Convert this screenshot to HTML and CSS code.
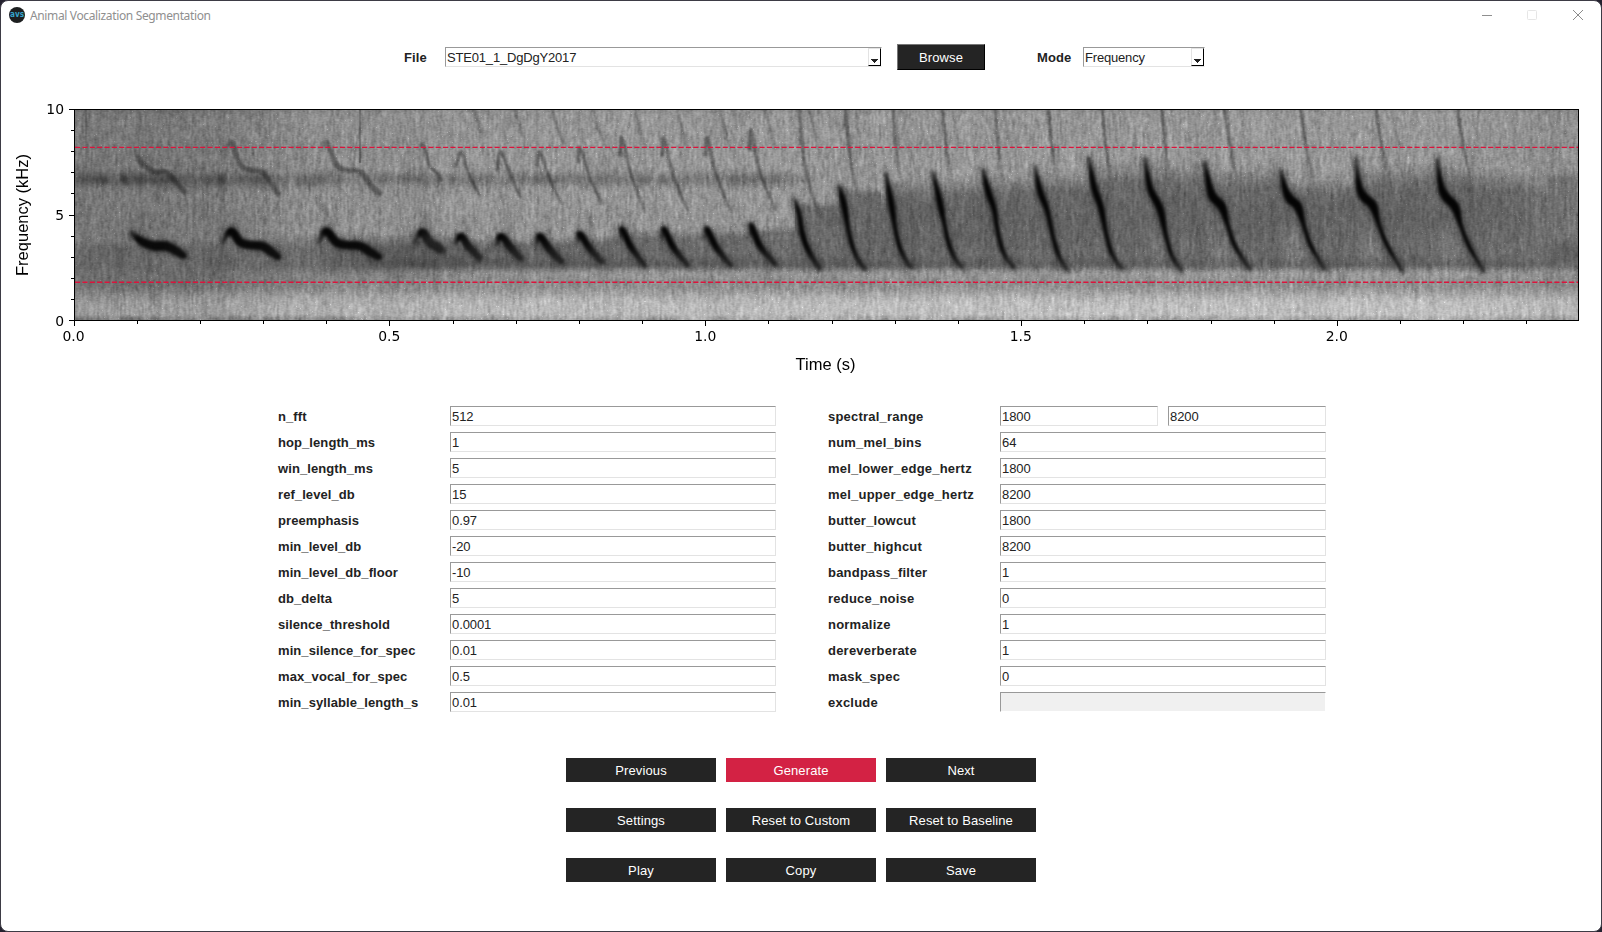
FILE: index.html
```html
<!DOCTYPE html>
<html lang="en">
<head>
<meta charset="utf-8">
<title>Animal Vocalization Segmentation</title>
<link rel="stylesheet" href="styles.css">
</head>
<body>
<div class="window">
  <header class="titlebar">
    <svg class="logo" width="16" height="16" viewBox="0 0 16 16"><circle cx="8" cy="8" r="8" fill="#1d1f20"/><text x="8" y="10.200" text-anchor="middle" textLength="14" lengthAdjust="spacingAndGlyphs" class="logo-text">avs</text></svg>
    <span class="title">Animal Vocalization Segmentation</span>
    <svg class="controls" width="110" height="16" viewBox="0 0 110 16" fill="none">
      <path d="M4 8.500h10" stroke="#8f8f8f"/>
      <rect x="49.500" y="3.500" width="9" height="9" rx="1" stroke="#e6e6e6"/>
      <path d="M95 3l10 10M105 3L95 13" stroke="#8b8b8b"/>
    </svg>
  </header>

  <section class="toolbar">
    <label class="label file-label">File</label>
    <div class="combo combo-file"><span>STE01_1_DgDgY2017</span><i class="arrow"><svg width="7" height="4" viewBox="0 0 7 4"><path d="M0 0h7v1H6v1H5v1H4v1H3V3H2V2H1V1H0z" fill="#222"/></svg></i></div>
    <button class="browse">Browse</button>
    <label class="label mode-label">Mode</label>
    <div class="combo combo-mode"><span>Frequency</span><i class="arrow"><svg width="7" height="4" viewBox="0 0 7 4"><path d="M0 0h7v1H6v1H5v1H4v1H3V3H2V2H1V1H0z" fill="#222"/></svg></i></div>
  </section>

  <section class="plot">
    <canvas id="spectrogram" class="spectrogram" width="1504" height="211"></canvas>
    <svg id="axes" class="axes" width="1600" height="300" viewBox="1 90 1600 300">
      <g stroke="#dc143c" stroke-width="1.4" stroke-dasharray="5.140 2.220">
        <path d="M75 147.400H1578M75 282.300H1578"/>
      </g>
      <rect x="74.500" y="109.500" width="1504" height="211" fill="none" stroke="#000"/>
      <g id="ticks" stroke="#000"></g>
      <g class="tick-text" text-anchor="end">
        <text x="64" y="114">10</text><text x="64" y="220">5</text><text x="64" y="326">0</text>
      </g>
      <g class="tick-text" text-anchor="middle">
        <text x="73.500" y="341">0.0</text><text x="389.300" y="341">0.5</text><text x="705.300" y="341">1.0</text><text x="1020.700" y="341">1.5</text><text x="1336.700" y="341">2.0</text>
      </g>
      <text class="axis-text" x="825.500" y="370" text-anchor="middle">Time (s)</text>
      <text class="axis-text" transform="translate(28 215) rotate(-90)" text-anchor="middle">Frequency (kHz)</text>
    </svg>
  </section>

  <section class="params">
    <div class="column">
      <div class="row"><label class="label">n_fft</label><div class="field">512</div></div>
      <div class="row"><label class="label">hop_length_ms</label><div class="field">1</div></div>
      <div class="row"><label class="label">win_length_ms</label><div class="field">5</div></div>
      <div class="row"><label class="label">ref_level_db</label><div class="field">15</div></div>
      <div class="row"><label class="label">preemphasis</label><div class="field">0.97</div></div>
      <div class="row"><label class="label">min_level_db</label><div class="field">-20</div></div>
      <div class="row"><label class="label">min_level_db_floor</label><div class="field">-10</div></div>
      <div class="row"><label class="label">db_delta</label><div class="field">5</div></div>
      <div class="row"><label class="label">silence_threshold</label><div class="field">0.0001</div></div>
      <div class="row"><label class="label">min_silence_for_spec</label><div class="field">0.01</div></div>
      <div class="row"><label class="label">max_vocal_for_spec</label><div class="field">0.5</div></div>
      <div class="row"><label class="label">min_syllable_length_s</label><div class="field">0.01</div></div>
    </div>
    <div class="column wide-labels">
      <div class="row"><label class="label">spectral_range</label><div class="field">1800</div><div class="field second">8200</div></div>
      <div class="row"><label class="label">num_mel_bins</label><div class="field">64</div></div>
      <div class="row"><label class="label">mel_lower_edge_hertz</label><div class="field">1800</div></div>
      <div class="row"><label class="label">mel_upper_edge_hertz</label><div class="field">8200</div></div>
      <div class="row"><label class="label">butter_lowcut</label><div class="field">1800</div></div>
      <div class="row"><label class="label">butter_highcut</label><div class="field">8200</div></div>
      <div class="row"><label class="label">bandpass_filter</label><div class="field">1</div></div>
      <div class="row"><label class="label">reduce_noise</label><div class="field">0</div></div>
      <div class="row"><label class="label">normalize</label><div class="field">1</div></div>
      <div class="row"><label class="label">dereverberate</label><div class="field">1</div></div>
      <div class="row"><label class="label">mask_spec</label><div class="field">0</div></div>
      <div class="row"><label class="label">exclude</label><div class="field disabled"></div></div>
    </div>
  </section>

  <section class="actions">
    <button>Previous</button><button class="primary">Generate</button><button>Next</button>
    <button>Settings</button><button>Reset to Custom</button><button>Reset to Baseline</button>
    <button>Play</button><button>Copy</button><button>Save</button>
  </section>
</div>
<script src="spectrogram.js"></script>
</body>
</html>
```
FILE: styles.css
```css
* { box-sizing: border-box; }
body {
  margin: 0;
  background: #24222f;
  font-family: "Liberation Sans", Arial, sans-serif;
  font-size: 13px;
  color: #222;
}
.window {
  width: 1602px;
  height: 932px;
  border: 1px solid #3d3b45;
  border-radius: 8px;
  background: #fff;
  overflow: hidden;
}
.titlebar {
  display: flex;
  align-items: center;
  height: 28px;
  padding: 0 13px 0 8px;
}
.logo { flex: none; }
.logo-text { font: bold 8px "DejaVu Sans", sans-serif; fill: #35a5cd; }
.title {
  margin-left: 5px;
  padding-top: 1px;
  font: 12px "Noto Sans", sans-serif;
  letter-spacing: -0.36px;
  color: #8f8f8f;
}
.controls { margin-left: auto; }

.toolbar {
  display: flex;
  align-items: center;
  height: 56px;
  padding-left: 403px;
}
.label {
  font-weight: bold;
  letter-spacing: 0.08px;
  line-height: 22px;
}
.wide-labels .label { letter-spacing: 0.22px; }
.file-label { width: 41px; padding-top: 2px; }
.combo {
  display: flex;
  justify-content: space-between;
  height: 20px;
  border: 1px solid;
  border-color: #999 #fff #e3e3e3 #999;
  padding-left: 1px;
  line-height: 20px;
  letter-spacing: -0.18px;
}
.combo-file { width: 437px; }
.combo-mode { width: 122px; }
.arrow {
  display: flex;
  justify-content: center;
  align-items: flex-end;
  width: 13px;
  height: 18px;
  padding-bottom: 2px;
  border: 1px solid;
  border-color: #e3e3e3 #000 #000 #e3e3e3;
}
button {
  border: 0;
  border-radius: 0;
  padding: 0;
  background: #242424;
  color: #fff;
  font: 13px "Liberation Sans", Arial, sans-serif;
  letter-spacing: 0.12px;
}
.browse {
  width: 88px;
  height: 26px;
  margin-left: 15px;
  border: 1px solid;
  border-color: #777 #000 #000 #777;
}
.mode-label { width: 46px; margin-left: 52px; padding-top: 2px; }

.plot { position: relative; height: 300px; margin-top: 5px; }
.spectrogram {
  display: block;
  position: absolute;
  left: 73px;
  top: 19px;
}
.axes { display: block; position: relative; }
.tick-text { font: 13.900px "DejaVu Sans", sans-serif; fill: #000; }
.axis-text { font: 16.500px "Liberation Sans", Arial, sans-serif; fill: #000; }

.params {
  display: flex;
  gap: 52px;
  padding: 16px 0 0 277px;
}
.column { display: grid; grid-auto-rows: 20px; row-gap: 6px; width: 498px; }
.row { display: flex; height: 20px; }
.row .label { width: 172px; flex: none; }
.field {
  flex: 1;
  height: 20px;
  border: 1px solid;
  border-color: #999 #e3e3e3 #e3e3e3 #999;
  padding-left: 1px;
  line-height: 20px;
  letter-spacing: -0.1px;
}
.second { margin-left: 10px; }
.disabled { background: #f0f0f0; border-right-color: #fff; border-bottom-color: #fff; }

.actions {
  display: grid;
  grid-template-columns: repeat(3, 150px);
  grid-auto-rows: 24px;
  gap: 26px 10px;
  padding: 46px 0 0 565px;
}
.primary { background: #d32244; }
```
FILE: spectrogram.js
```js
const X0 = 74, Y0 = 109, W = 1504, H = 211;
const canvas = document.getElementById('spectrogram');
const ctx = canvas.getContext('2d');

let seed = 20171;
function rnd() {
  seed = (seed * 1664525 + 1013904223) >>> 0;
  return seed / 4294967296;
}
const gauss = () => rnd() + rnd() + rnd() + rnd() - 2;

// Calls as [x, y, stroke width] ridge points.
const calls = [
  [[132,233,4],[137,238,6],[145,243,8],[155,246,9],[166,246,9],[176,251,8],[184,256,6]],
  [[223,242,3],[231,231,7],[240,242,8],[250,245,8],[262,246,8],[270,251,8],[278,257,6]],
  [[319,242,3],[326,231,7],[336,242,8],[346,245,8],[360,246,8],[370,252,8],[379,257,6]],
  [[415,243,3],[422,232,7],[430,243,8],[436,246,8],[441,250,7]],
  [[456,243,3],[461,236,6],[469,247,7],[480,258,6]],
  [[497,245,3],[501,236,6],[511,248,7],[521,259,5]],
  [[537,243,3],[540,236,6],[550,250,7],[562,262,5]],
  [[578,241,3],[580,234,6],[590,249,6],[602,262,5]],
  [[620,238,2],[622,229,5],[631,247,6],[645,266,4]],
  [[662,238,2],[664,229,5],[673,247,6],[688,266,4]],
  [[705,238,2],[707,229,5],[716,247,6],[731,266,4]],
  [[750,235,2],[751,225,5],[760,246,6],[776,265,4]],
  [[795,200,3],[799,214,4],[802,232,5],[806,245,5],[812,257,5],[820,269,4]],
  [[839,186,3],[844,205,6],[848,228,4],[852,245,4],[858,260,4],[865,269,4]],
  [[886,174,3],[891,202,6],[895,227,4],[899,245,4],[905,259,4],[912,268,3]],
  [[933,173,3],[940,203,6],[944,222,4],[948,241,4],[954,257,4],[962,268,3]],
  [[983,170,3],[988,191,6],[994,209,5],[998,233,4],[1004,254,4],[1014,268,3]],
  [[1035,166,2],[1040,191,6],[1047,210,5],[1053,237,4],[1059,256,4],[1067,270,3]],
  [[1089,158,3],[1094,187,6],[1101,208,6],[1106,233,4],[1112,254,4],[1122,269,3]],
  [[1145,158,3],[1150,188,6],[1160,209,7],[1166,236,4],[1172,256,4],[1181,270,3]],
  [[1205,163,4],[1209,185,6],[1213,197,8],[1222,207,8],[1228,226,4],[1235,246,4],[1250,270,3]],
  [[1281,171,3],[1285,189,6],[1290,199,8],[1298,207,8],[1304,226,4],[1311,246,4],[1325,270,3]],
  [[1356,159,3],[1359,186,6],[1364,197,8],[1373,206,8],[1379,225,4],[1387,245,4],[1402,271,3]],
  [[1437,159,3],[1441,186,6],[1446,197,8],[1455,207,8],[1461,226,4],[1469,246,4],[1484,272,3]],
];

function spline(points) {
  const out = [];
  for (let i = 0; i < points.length - 1; i++) {
    const a = points[Math.max(0, i - 1)], b = points[i];
    const c = points[i + 1], d = points[Math.min(points.length - 1, i + 2)];
    for (let t = 0; t < 1; t += 0.05) {
      out.push(b.map((_, k) => 0.5 * (2 * b[k] + (c[k] - a[k]) * t +
        (2 * a[k] - 5 * b[k] + 4 * c[k] - d[k]) * t * t +
        (3 * b[k] - a[k] - 3 * c[k] + d[k]) * t * t * t)));
    }
  }
  return out;
}

const smooth = (a, b, v) => {
  const t = Math.min(1, Math.max(0, (v - a) / (b - a)));
  return t * t * (3 - 2 * t);
};
const bump = (v, c, w) => Math.exp(-(((v - c) / w) ** 2));

// Slow random variation along time for the background bands.
function slowNoise(step) {
  const k = Array.from({ length: Math.ceil(W / step) + 2 }, gauss);
  return x => {
    const i = Math.floor(x / step), f = x / step - i;
    return k[i] * (1 - f) + k[i + 1] * f;
  };
}
const bandHigh = slowNoise(7), bandLow = slowNoise(11), columns = slowNoise(3);
const edge = slowNoise(8);

// Top of the echo region behind each call.
const echoTop = new Float32Array(W).fill(236);
for (let x = 0; x < W; x++) {
  const px = x + X0;
  for (const c of calls) {
    if (px >= c[0][0]) echoTop[x] = Math.min(c[0][1], c[1][1]) + 2;
  }
  if (px > 1470) echoTop[x] = 164 + (px - 1470) * 0.08;
}

function background(x, y) {
  const px = x + X0, py = y + Y0;
  let g = 119 + 21 * smooth(190, 330, px) + 9 * smooth(380, 480, px) + 2 * smooth(800, 1000, px) - 10 * smooth(1450, 1560, px);
  g += 34 * smooth(280, 306, py) + 5 * smooth(600, 900, px) * smooth(285, 300, py);
  g -= 34 * smooth(313, 319, py) * (0.7 + 0.5 * edge(x));
  g -= 10 * bump(py, 109, 3);
  g -= 10 * bump(py, 286, 9);
  g -= (32 + 17 * bandHigh(x)) * bump(py, 179, 7) * (1 - smooth(760, 840, px));
  if (px < 600) {
    const amount = (20 + 6 * bandLow(x)) * (1 - 0.75 * smooth(400, 560, px));
    g -= amount * smooth(238, 250, py) * (1 - smooth(264, 286, py));
  }
  const power = smooth(200, 420, px) * (1 - 0.45 * smooth(1460, 1578, px));
  const top = echoTop[x];
  const inside = smooth(top - 4, top + (px > 880 ? 26 : 8), py) * (1 - smooth(264, 274, py));
  const shade = (px < 600 ? 30 + 14 * smooth(400, 600, px) : 44) + 8 * smooth(800, 900, px) * bump(py, 215, 30);
  g -= power * inside * shade;
  g -= 11 * bump(py, 263, 6) * smooth(300, 420, px);
  if (px > 800) {
    for (const c of calls) {
      const d = px - c[0][0];
      if (d > -4 && d < 35) g += 17 * bump(d, 12, 10) * bump(py, 250, 22) * smooth(1080, 1200, px);
    }
  }
  g -= 26 * bump(px, 1567, 20) * bump(py, 252, 9);
  g -= 24 * bump(px, 1565, 15) * bump(py, 179, 6);
  g -= 20 * bump(px, 85.5, 1) * smooth(180, 110, py);
  g -= 42 * bump(px, 359.500, 1) * (py < 163 ? 1 : 0);
  return g + 4 * columns(x);
}

const base = ctx.createImageData(W, H);
for (let y = 0; y < H; y++) {
  for (let x = 0; x < W; x++) {
    const g = background(x, y), i = (y * W + x) * 4;
    base.data[i] = base.data[i + 1] = base.data[i + 2] = g;
    base.data[i + 3] = 255;
  }
}
ctx.putImageData(base, 0, 0);

function strokeRidge(points, width, alpha, blur) {
  const layer = document.createElement('canvas');
  layer.width = W;
  layer.height = H;
  const c = layer.getContext('2d');
  for (const p of points) {
    const a = alpha(p);
    if (a <= 0) continue;
    const v = Math.round(255 * (1 - a));
    c.fillStyle = `rgb(${v},${v},${v})`;
    c.beginPath();
    c.arc(p[0] - X0, p[1] - Y0, Math.max(0.6, width(p) / 2), 0, 7);
    c.fill();
  }
  ctx.save();
  ctx.filter = `blur(${blur}px)`;
  ctx.globalCompositeOperation = 'multiply';
  ctx.drawImage(layer, 0, 0);
  ctx.restore();
}

function dense(points) {
  const out = [];
  for (let i = 0; i < points.length - 1; i++) {
    const a = points[i], b = points[i + 1];
    for (let t = 0; t < 1; t += 0.1) out.push(a.map((v, k) => v + (b[k] - v) * t));
  }
  return out;
}

calls.forEach((call, n) => {
  const pts = spline(call);
  const start = call[0][0];
  const tail = call[call.length - 1][1];
  const onset = p => 0.45 + 0.55 * smooth(start - 1, start + (n < 4 ? 9 : 3), p[0]);
  strokeRidge(pts, p => p[2] + 6, () => 0.22, 2.5);
  strokeRidge(pts, p => p[2], p => onset(p) * (0.95 - (n < 3 ? 0.12 : 0.4) * smooth(tail - 22, tail, p[1])), 1.4);
  const late = n > 12;
  const harmonic = m => dense(pts.map(p => [p[0] + (m - 2) * 2, 320 - m * (320 - p[1]), p[2]]));
  strokeRidge(harmonic(2), () => (n < 3 ? 4.5 : 2.5),
    p => (n < 3 ? 0.34 : 0.36) * (n < 4 ? smooth(start - 2, start + 12, p[0]) : 1) *
      (late ? 1 - smooth(150, n === 13 ? 215 : 195, p[1]) : 1 - 0.5 * smooth(190, 220, p[1])), 1.2);
  if (n > 3) strokeRidge(harmonic(3), () => 2, p => (late ? 0.13 : 0.24) * (1 - smooth(125, 168, p[1])), 1);
  if (n < 3) {
    // Offset click trailing under the harmonic.
    const end = call[call.length - 1][0] + 1;
    strokeRidge(dense([[end, 192, 2], [end, 215, 2]]), () => 2, () => 0.22, 1);
  }
  if (n < 9) {
    // Onset smears above the early calls.
    if (n > 0) strokeRidge(dense([[start + 1, 190, 3], [start, 232, 3]]), () => 2.5, () => 0.18, 1.5);
    strokeRidge(dense([[start + 10, 214, 5], [start + 13, 236, 5]]), () => 6, () => 0.17, 3);
  }
});

// Fine grain, stretched along frequency.
const noise = new Float32Array(W * H);
for (let x = 0; x < W; x++) {
  let v = gauss() * 6;
  for (let y = 0; y < H; y++) {
    v = v * 0.78 + gauss() * 13;
    noise[y * W + x] = v;
  }
}
const image = ctx.getImageData(0, 0, W, H);
for (let y = 0; y < H; y++) {
  for (let x = 0; x < W; x++) {
    const k = y * W + x, i = k * 4;
    const left = x ? noise[k - 1] : noise[k], right = x < W - 1 ? noise[k + 1] : noise[k];
    let v = 0.6 * noise[k] + 0.28 * (left + right);
    if (rnd() > 0.996) v += 26;
    const g = image.data[i];
    const scaled = g + v * Math.min(1, Math.max(0.05, (g - 15) / 115));
    image.data[i] = image.data[i + 1] = image.data[i + 2] = scaled;
  }
}
ctx.putImageData(image, 0, 0);

// Axis ticks.
let d = '';
for (let i = 0; i <= 23; i++) {
  const x = Math.floor(74 + i * 63.17) + 0.5;
  d += `M${x} 321v${i % 5 ? 3 : 5}`;
}
for (let i = 0; i <= 10; i++) {
  const y = Math.round(320 - i * 21.1) + 0.5;
  d += `M74 ${y}h-${i % 5 ? 3 : 5}`;
}
const path = document.createElementNS('http://www.w3.org/2000/svg', 'path');
path.setAttribute('d', d);
document.getElementById('ticks').appendChild(path);
```
